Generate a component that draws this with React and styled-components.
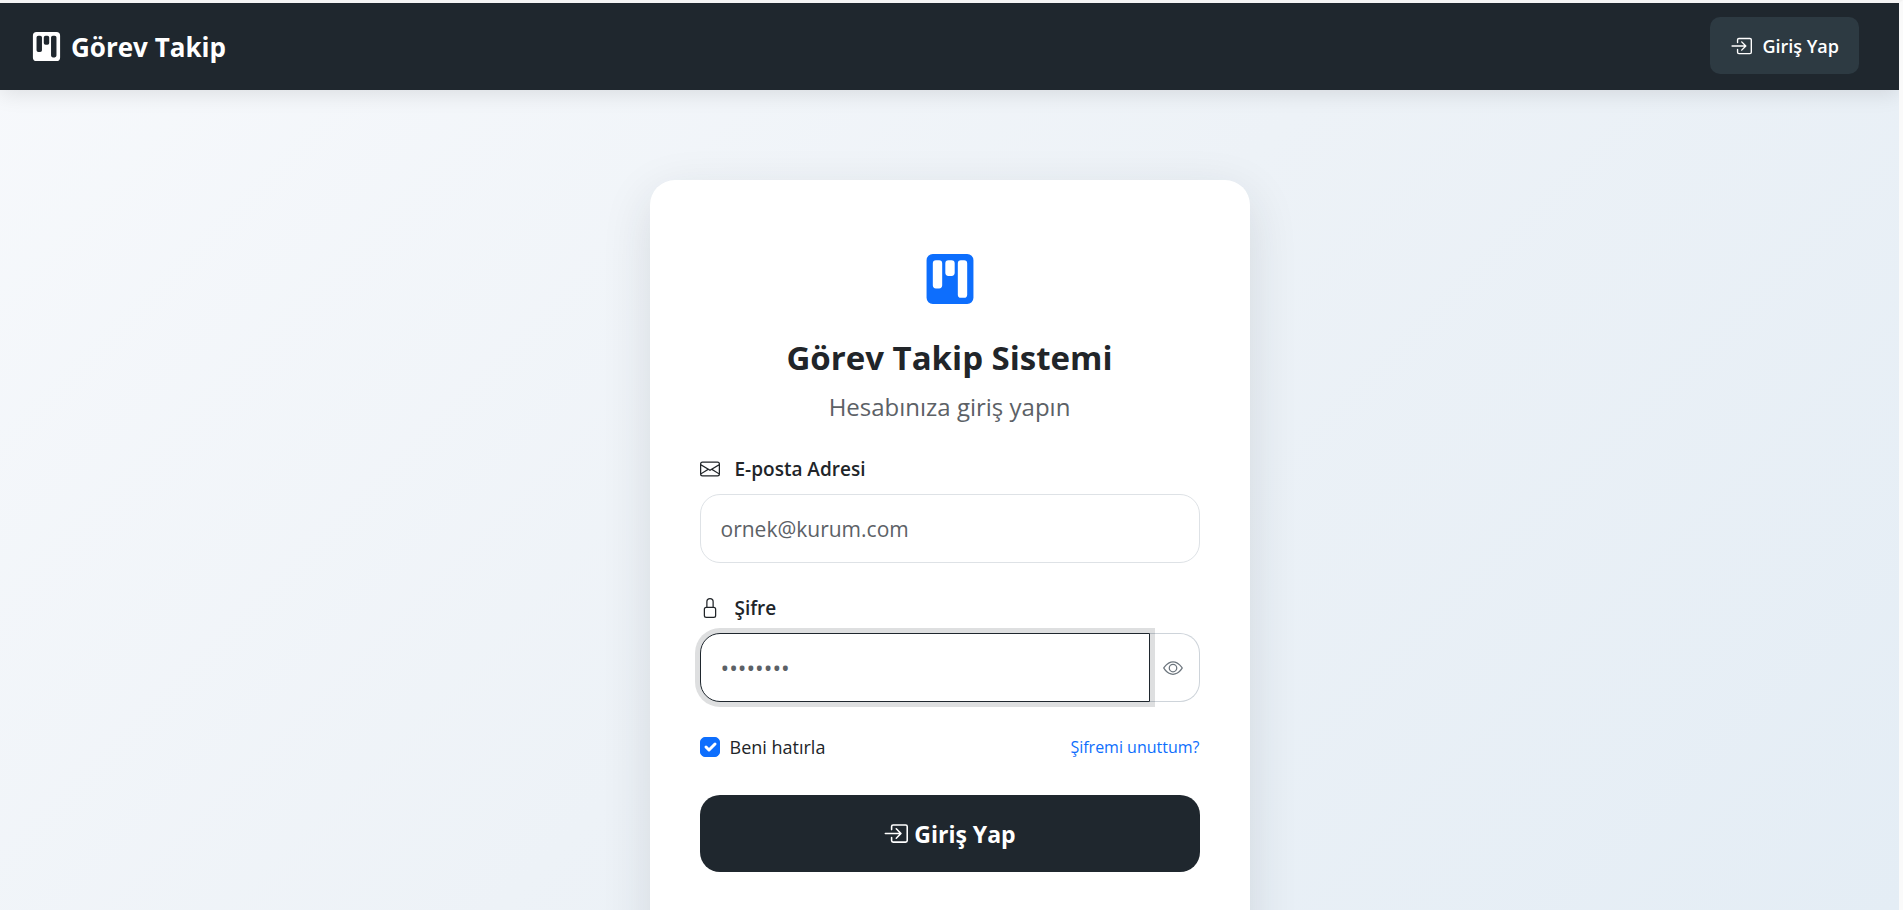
import React, { useState } from "react";
import styled, { createGlobalStyle } from "styled-components";
import {
  BsBoxArrowInRight,
  BsEnvelope,
  BsEye,
  BsKanbanFill,
  BsLock,
} from "react-icons/bs";

const GlobalStyle = createGlobalStyle`
  * {
    box-sizing: border-box;
  }
  body {
    margin: 0;
    color: #212529;
    font-family: "Open Sans", "Noto Sans", sans-serif;
    font-size: 18px;
    line-height: 30px;
    overflow: hidden;
  }
  input, button {
    font-family: inherit;
  }
`;

const Page = styled.div`
  height: 100vh;
  overflow: hidden;
  border-top: 3px solid #f4f4f4;
  border-right: 4px solid #fafafa;
  background: linear-gradient(135deg, #f7f9fc 0%, #edf2f7 50%, #e4edf5 100%);
`;

const Navbar = styled.header`
  display: flex;
  align-items: center;
  justify-content: space-between;
  padding: 14px 40px 16px 32px;
  background: #1f272e;
  box-shadow: 0 4px 20px rgba(0, 0, 0, 0.1);
`;

const Brand = styled.a`
  display: flex;
  align-items: center;
  gap: 10px;
  padding-top: 2px;
  color: #fff;
  font-size: 26px;
  font-weight: 700;
  text-decoration: none;
`;

const NavButton = styled.a`
  display: flex;
  align-items: center;
  gap: 10px;
  height: 57px;
  padding: 0 20px;
  border-radius: 10px;
  background: #2d3a42;
  color: #fff;
  font-size: 18px;
  font-weight: 600;
  text-decoration: none;
`;

const Main = styled.main`
  display: flex;
  justify-content: center;
  padding: 90px 20px;
`;

const Card = styled.form`
  width: 600px;
  padding: 74px 50px 100px;
  border-radius: 25px;
  background: #fff;
  box-shadow: 0 15px 50px rgba(31, 39, 46, 0.12);
`;

const CardHeader = styled.div`
  display: flex;
  flex-direction: column;
  align-items: center;
  margin-bottom: 32px;
  color: #0d6efd;
`;

const Title = styled.h1`
  margin: 32px 0 12px;
  color: #212529;
  font-size: 33px;
  font-weight: 700;
  line-height: 44px;
`;

const Subtitle = styled.p`
  margin: 0;
  color: #5c6166;
  font-size: 24px;
`;

const Field = styled.div`
  margin-bottom: 30px;
`;

const Label = styled.label`
  display: flex;
  align-items: center;
  gap: 15px;
  margin-bottom: 10px;
  font-size: 19px;
  font-weight: 600;
`;

const InputGroup = styled.div`
  display: flex;
`;

const Input = styled.input`
  flex: 1;
  min-width: 0;
  height: 69px;
  padding: 0 20px;
  border: 1px solid #dee2e6;
  border-radius: ${({ $joined }) => ($joined ? "20px 0 0 20px" : "20px")};
  outline: none;
  background: #fff;
  color: #212529;
  font-size: ${({ $joined }) => ($joined ? "23px" : "21px")};

  &::placeholder {
    color: #5c6166;
    opacity: 1;
  }
  &:focus {
    z-index: 1;
    border-color: #1f272e;
    box-shadow: 0 0 0 5px rgba(31, 39, 46, 0.15);
    caret-color: transparent;
  }
`;

const EyeButton = styled.button`
  display: flex;
  align-items: center;
  justify-content: center;
  width: 50px;
  padding: 0 3px 0 0;
  border: 1px solid #ced4da;
  border-left: none;
  border-radius: 0 20px 20px 0;
  background: #fff;
  color: #6c757d;
`;

const Options = styled.div`
  display: flex;
  align-items: center;
  justify-content: space-between;
  margin-bottom: 33px;
`;

const Remember = styled.label`
  display: flex;
  align-items: center;
  gap: 10px;
`;

const CheckWrap = styled.span`
  display: grid;
  place-items: center;

  & > * {
    grid-area: 1 / 1;
  }
  & svg {
    pointer-events: none;
  }
`;

const Checkbox = styled.input`
  width: 20px;
  height: 20px;
  margin: 0;
  border: 1px solid #dee2e6;
  border-radius: 5px;
  appearance: none;

  &:checked {
    border-color: #0d6efd;
    background: #0d6efd;
  }
`;

const ForgotLink = styled.a`
  color: #0d6efd;
  font-size: 16px;
  text-decoration: none;
`;

const SubmitButton = styled.button`
  display: flex;
  align-items: center;
  justify-content: center;
  gap: 6px;
  width: 100%;
  height: 77px;
  border: none;
  border-radius: 20px;
  background: #1f272e;
  color: #fff;
  font-size: 23px;
  font-weight: 700;
`;

const CheckMark = () => (
  <svg width="20" height="20" viewBox="0 0 20 20" fill="none" aria-hidden="true">
    <path
      d="m6 10 3 3 6-6"
      stroke="#fff"
      strokeWidth="3"
      strokeLinecap="round"
      strokeLinejoin="round"
    />
  </svg>
);

const App = () => {
  const [remember, setRemember] = useState(true);
  const [visible, setVisible] = useState(false);

  return (
    <>
      <GlobalStyle />
      <Page>
        <Navbar>
          <Brand href="#">
            <BsKanbanFill size={29} />
            Görev Takip
          </Brand>
          <NavButton href="#giris">
            <BsBoxArrowInRight size={22} />
            Giriş Yap
          </NavButton>
        </Navbar>
        <Main>
          <Card onSubmit={(e) => e.preventDefault()}>
            <CardHeader>
              <BsKanbanFill size={50} />
              <Title>Görev Takip Sistemi</Title>
              <Subtitle>Hesabınıza giriş yapın</Subtitle>
            </CardHeader>
            <Field>
              <Label htmlFor="email">
                <BsEnvelope size={20} />
                E-posta Adresi
              </Label>
              <InputGroup>
                <Input id="email" type="email" placeholder="ornek@kurum.com" />
              </InputGroup>
            </Field>
            <Field>
              <Label htmlFor="password">
                <BsLock size={20} />
                Şifre
              </Label>
              <InputGroup>
                <Input
                  id="password"
                  type={visible ? "text" : "password"}
                  placeholder="••••••••"
                  $joined
                  autoFocus
                />
                <EyeButton
                  type="button"
                  aria-label="Şifreyi göster"
                  onClick={() => setVisible(!visible)}
                >
                  <BsEye size={20} />
                </EyeButton>
              </InputGroup>
            </Field>
            <Options>
              <Remember>
                <CheckWrap>
                  <Checkbox
                    type="checkbox"
                    checked={remember}
                    onChange={(e) => setRemember(e.target.checked)}
                  />
                  {remember && <CheckMark />}
                </CheckWrap>
                Beni hatırla
              </Remember>
              <ForgotLink href="#sifre">Şifremi unuttum?</ForgotLink>
            </Options>
            <SubmitButton type="submit">
              <BsBoxArrowInRight size={25} />
              Giriş Yap
            </SubmitButton>
          </Card>
        </Main>
      </Page>
    </>
  );
};

export default App;
